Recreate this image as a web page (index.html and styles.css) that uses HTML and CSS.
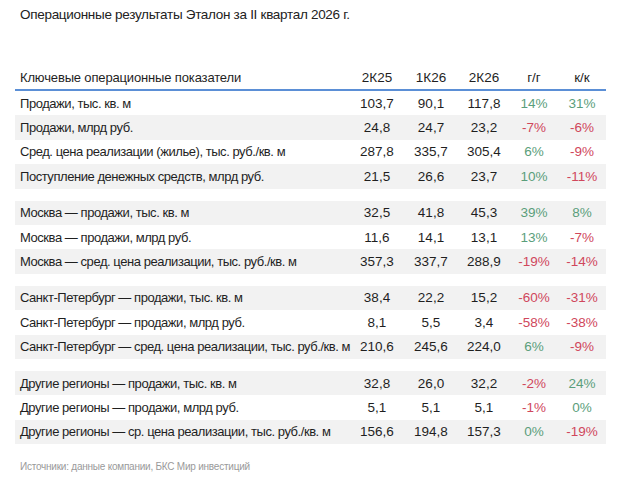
FILE: index.html
```html
<!DOCTYPE html>
<html lang="ru">
<head>
<meta charset="utf-8">
<link rel="stylesheet" href="styles.css">
</head>
<body>
<div class="page">
  <h1 class="title">Операционные результаты Эталон за II квартал 2026 г.</h1>
  <table class="data">
    <colgroup>
      <col class="c-name"><col class="c-num"><col class="c-num"><col class="c-num2"><col class="c-pct"><col class="c-pct">
    </colgroup>
    <thead>
      <tr><th class="name">Ключевые операционные показатели</th><th>2К25</th><th>1К26</th><th>2К26</th><th>г/г</th><th>к/к</th></tr>
    </thead>
    <tbody>
      <tr><td class="name">Продажи, тыс. кв. м</td><td>103,7</td><td>90,1</td><td>117,8</td><td class="up">14%</td><td class="up">31%</td></tr>
      <tr class="alt"><td class="name">Продажи, млрд руб.</td><td>24,8</td><td>24,7</td><td>23,2</td><td class="down">-7%</td><td class="down">-6%</td></tr>
      <tr><td class="name">Сред. цена реализации (жилье), тыс. руб./кв. м</td><td>287,8</td><td>335,7</td><td>305,4</td><td class="up">6%</td><td class="down">-9%</td></tr>
      <tr class="alt"><td class="name">Поступление денежных средств, млрд руб.</td><td>21,5</td><td>26,6</td><td>23,7</td><td class="up">10%</td><td class="down">-11%</td></tr>
      <tr class="spacer"><td colspan="6"></td></tr>
      <tr class="alt"><td class="name">Москва — продажи, тыс. кв. м</td><td>32,5</td><td>41,8</td><td>45,3</td><td class="up">39%</td><td class="up">8%</td></tr>
      <tr><td class="name">Москва — продажи, млрд руб.</td><td>11,6</td><td>14,1</td><td>13,1</td><td class="up">13%</td><td class="down">-7%</td></tr>
      <tr class="alt"><td class="name">Москва — сред. цена реализации, тыс. руб./кв. м</td><td>357,3</td><td>337,7</td><td>288,9</td><td class="down">-19%</td><td class="down">-14%</td></tr>
      <tr class="spacer"><td colspan="6"></td></tr>
      <tr class="alt"><td class="name">Санкт-Петербург — продажи, тыс. кв. м</td><td>38,4</td><td>22,2</td><td>15,2</td><td class="down">-60%</td><td class="down">-31%</td></tr>
      <tr><td class="name">Санкт-Петербург — продажи, млрд руб.</td><td>8,1</td><td>5,5</td><td>3,4</td><td class="down">-58%</td><td class="down">-38%</td></tr>
      <tr class="alt"><td class="name">Санкт-Петербург — сред. цена реализации, тыс. руб./кв. м</td><td>210,6</td><td>245,6</td><td>224,0</td><td class="up">6%</td><td class="down">-9%</td></tr>
      <tr class="spacer"><td colspan="6"></td></tr>
      <tr class="alt"><td class="name">Другие регионы — продажи, тыс. кв. м</td><td>32,8</td><td>26,0</td><td>32,2</td><td class="down">-2%</td><td class="up">24%</td></tr>
      <tr><td class="name">Другие регионы — продажи, млрд руб.</td><td>5,1</td><td>5,1</td><td>5,1</td><td class="down">-1%</td><td class="up">0%</td></tr>
      <tr class="alt"><td class="name">Другие регионы — ср. цена реализации, тыс. руб./кв. м</td><td>156,6</td><td>194,8</td><td>157,3</td><td class="up">0%</td><td class="down">-19%</td></tr>
    </tbody>
  </table>
  <p class="source">Источники: данные компании, БКС Мир инвестиций</p>
</div>
</body>
</html>
```
FILE: styles.css
```css
html, body {
  margin: 0;
  padding: 0;
  background: #ffffff;
}
.page {
  width: 591px;
  padding: 5px 0 0 15px;
  font-family: "Liberation Sans", Arial, sans-serif;
  color: #1f1f1f;
}
.title {
  margin: 0;
  padding-left: 5px;
  font-size: 13.5px;
  letter-spacing: -0.3px;
  font-weight: normal;
  line-height: 20px;
  color: #222;
}
.data {
  margin-top: 41px;
  width: 591px;
  border-collapse: collapse;
  table-layout: fixed;
  font-size: 13.5px;
}
.c-name { width: 335px; }
.c-num { width: 54px; }
.c-num2 { width: 52px; }
.c-pct { width: 48px; }
.data th {
  font-weight: normal;
  height: 23px;
  padding: 0;
  text-align: center;
  border-bottom: 2px solid #5b8fd6;
  vertical-align: middle;
}
.data td {
  height: 24.4px;
  padding: 0;
  text-align: center;
  vertical-align: middle;
}
.data .name {
  text-align: left;
  padding-left: 5px;
  white-space: nowrap;
  font-size: 13px;
  letter-spacing: -0.45px;
}
.data th.name {
  letter-spacing: -0.15px;
}
.data tr.alt td {
  background: #f2f2f2;
}
.data tr.spacer td {
  height: 12px;
  background: #ffffff;
}
.up { color: #5a9e7b; }
.down { color: #d0475c; }
.source {
  margin: 17px 0 0;
  padding-left: 5px;
  font-size: 10px;
  letter-spacing: -0.23px;
  color: #9a9a9a;
}
```
